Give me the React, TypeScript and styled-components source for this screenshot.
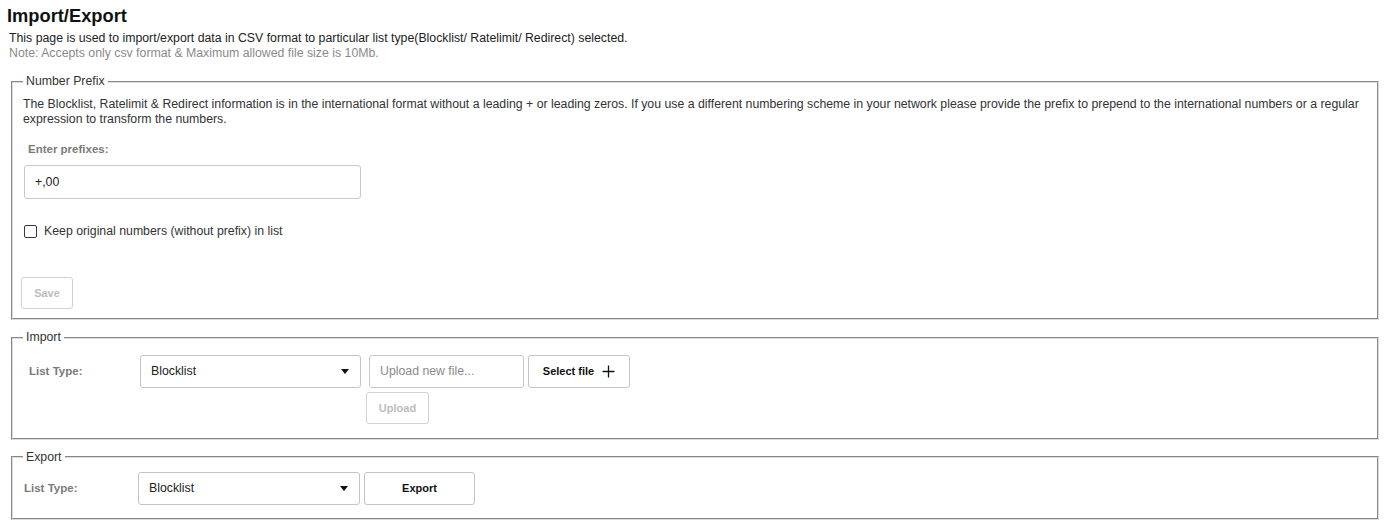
import React from "react";
import styled, { createGlobalStyle } from "styled-components";

const GlobalStyle = createGlobalStyle`
  html, body { margin: 0; padding: 0; background: #fff; }
  body { font-family: "Liberation Sans", Arial, sans-serif; color: #222; }
  * { box-sizing: border-box; }
`;

const Page = styled.div`
  padding: 5px 6px 4px 7px;
`;

const Title = styled.h1`
  margin: 0;
  font-size: 18.3px;
  line-height: 22px;
  font-weight: bold;
  color: #111;
`;

const IntroLine = styled.div<{ $muted?: boolean }>`
  padding-left: 2px;
  font-size: 12.3px;
  line-height: 15px;
  color: ${(p) => (p.$muted ? "#8a8a8a" : "#222")};
  margin-top: ${(p) => (p.$muted ? "0" : "4px")};
`;

const Fieldset = styled.fieldset<{ $top: number; $padTop: number; $padBottom: number }>`
  margin: ${(p) => p.$top}px 2px 0 4px;
  padding: ${(p) => p.$padTop}px 12px ${(p) => p.$padBottom}px 10px;
  border: 2px groove #dcdcdc;
  min-width: 0;
`;

const Legend = styled.legend`
  font-size: 12.3px;
  line-height: 15px;
  color: #333;
  padding: 0 3px;
`;

const Paragraph = styled.p`
  margin: 0;
  font-size: 12.3px;
  line-height: 15px;
  color: #333;
`;

const FieldLabel = styled.div`
  margin-top: 15px;
  padding-left: 5px;
  font-size: 11.5px;
  line-height: 15px;
  font-weight: bold;
  color: #7a7a7a;
`;

const TextInput = styled.div<{ $width: number; $placeholder?: boolean }>`
  width: ${(p) => p.$width}px;
  height: 34px;
  border: 1px solid #c8c8c8;
  border-radius: 3px;
  display: flex;
  align-items: center;
  padding-left: 10px;
  font-size: 12.3px;
  color: ${(p) => (p.$placeholder ? "#8a8a8a" : "#222")};
  background: #fff;
`;

const PrefixInput = styled(TextInput)`
  margin-top: 7.5px;
  margin-left: 1px;
`;

const FileInput = styled(TextInput)`
  height: 33px;
`;

const CheckRow = styled.label`
  margin-top: 25.5px;
  margin-left: 1px;
  display: flex;
  align-items: center;
  gap: 7px;
  font-size: 12.3px;
  line-height: 15px;
  color: #333;
`;

const CheckBox = styled.span`
  width: 13px;
  height: 13px;
  border: 1.5px solid #3f3150;
  border-radius: 2px;
  background: #fff;
`;

const Button = styled.button<{ $width: number; $height?: number; $disabled?: boolean }>`
  width: ${(p) => p.$width}px;
  height: ${(p) => p.$height ?? 32}px;
  border: 1px solid ${(p) => (p.$disabled ? "#d2d2d2" : "#c4c4c4")};
  border-radius: 3px;
  background: #fff;
  font-family: "Liberation Sans", Arial, sans-serif;
  font-size: 11px;
  font-weight: bold;
  color: ${(p) => (p.$disabled ? "#bcbcbc" : "#111")};
  display: flex;
  align-items: center;
  justify-content: center;
  gap: 8px;
  padding: 0;
  cursor: ${(p) => (p.$disabled ? "default" : "pointer")};
`;

const SaveButton = styled(Button)`
  margin-top: 37.5px;
  margin-left: -2px;
`;

const Row = styled.div<{ $labelWidth: number; $labelPad: number; $top: number }>`
  display: grid;
  grid-template-columns: ${(p) => p.$labelWidth}px auto;
  align-items: start;
  margin-top: ${(p) => p.$top}px;
  & > :first-child {
    padding-left: ${(p) => p.$labelPad}px;
  }
`;

const RowLabel = styled.div`
  height: 33px;
  display: flex;
  align-items: center;
  font-size: 11.5px;
  font-weight: bold;
  color: #7a7a7a;
`;

const Controls = styled.div<{ $gap: number }>`
  display: flex;
  gap: ${(p) => p.$gap}px;
  align-items: flex-start;
`;

const Select = styled.div<{ $width: number }>`
  width: ${(p) => p.$width}px;
  height: 33px;
  border: 1px solid #c4c4c4;
  border-radius: 3px;
  display: flex;
  align-items: center;
  justify-content: space-between;
  padding: 0 11px 0 10px;
  font-size: 12.3px;
  color: #222;
`;

const Caret = styled.span`
  width: 0;
  height: 0;
  border-left: 4.5px solid transparent;
  border-right: 4.5px solid transparent;
  border-top: 5px solid #111;
`;

const UploadColumn = styled.div`
  display: flex;
  flex-direction: column;
  gap: 4px;
  align-items: flex-start;
`;

const UploadTop = styled.div`
  display: flex;
  gap: 4px;
`;

const UploadButton = styled(Button)`
  margin-left: -3px;
`;

const PlusIcon = () => (
  <svg width="13" height="13" viewBox="0 0 13 13" aria-hidden="true">
    <path d="M6.5 0.5v12M0.5 6.5h12" stroke="#111" strokeWidth="1.3" fill="none" />
  </svg>
);

export default function App() {
  return (
    <>
      <GlobalStyle />
      <Page>
        <Title>Import/Export</Title>
        <IntroLine>
          This page is used to import/export data in CSV format to particular list type(Blocklist/ Ratelimit/ Redirect) selected.
        </IntroLine>
        <IntroLine $muted>Note: Accepts only csv format &amp; Maximum allowed file size is 10Mb.</IntroLine>

        <Fieldset $top={13} $padTop={8} $padBottom={9}>
          <Legend>Number Prefix</Legend>
          <Paragraph>
            The Blocklist, Ratelimit &amp; Redirect information is in the international format without a leading + or leading zeros. If you use a different numbering scheme in your network please provide the prefix to prepend to the international numbers or a regular expression to transform the numbers.
          </Paragraph>
          <FieldLabel>Enter prefixes:</FieldLabel>
          <PrefixInput $width={337}>+,00</PrefixInput>
          <CheckRow>
            <CheckBox />
            Keep original numbers (without prefix) in list
          </CheckRow>
          <SaveButton $width={52} $disabled>Save</SaveButton>
        </Fieldset>

        <Fieldset $top={10.5} $padTop={0} $padBottom={14}>
          <Legend>Import</Legend>
          <Row $labelWidth={117} $labelPad={6} $top={9.5}>
            <RowLabel>List Type:</RowLabel>
            <Controls $gap={8}>
              <Select $width={221}>
                Blocklist
                <Caret />
              </Select>
              <UploadColumn>
                <UploadTop>
                  <FileInput $width={155} $placeholder>Upload new file...</FileInput>
                  <Button $width={102} $height={33}>
                    Select file <PlusIcon />
                  </Button>
                </UploadTop>
                <UploadButton $width={63} $disabled>Upload</UploadButton>
              </UploadColumn>
            </Controls>
          </Row>
        </Fieldset>

        <Fieldset $top={10} $padTop={0} $padBottom={13}>
          <Legend>Export</Legend>
          <Row $labelWidth={115} $labelPad={1} $top={7}>
            <RowLabel>List Type:</RowLabel>
            <Controls $gap={4}>
              <Select $width={222}>
                Blocklist
                <Caret />
              </Select>
              <Button $width={111} $height={33}>Export</Button>
            </Controls>
          </Row>
        </Fieldset>
      </Page>
    </>
  );
}
